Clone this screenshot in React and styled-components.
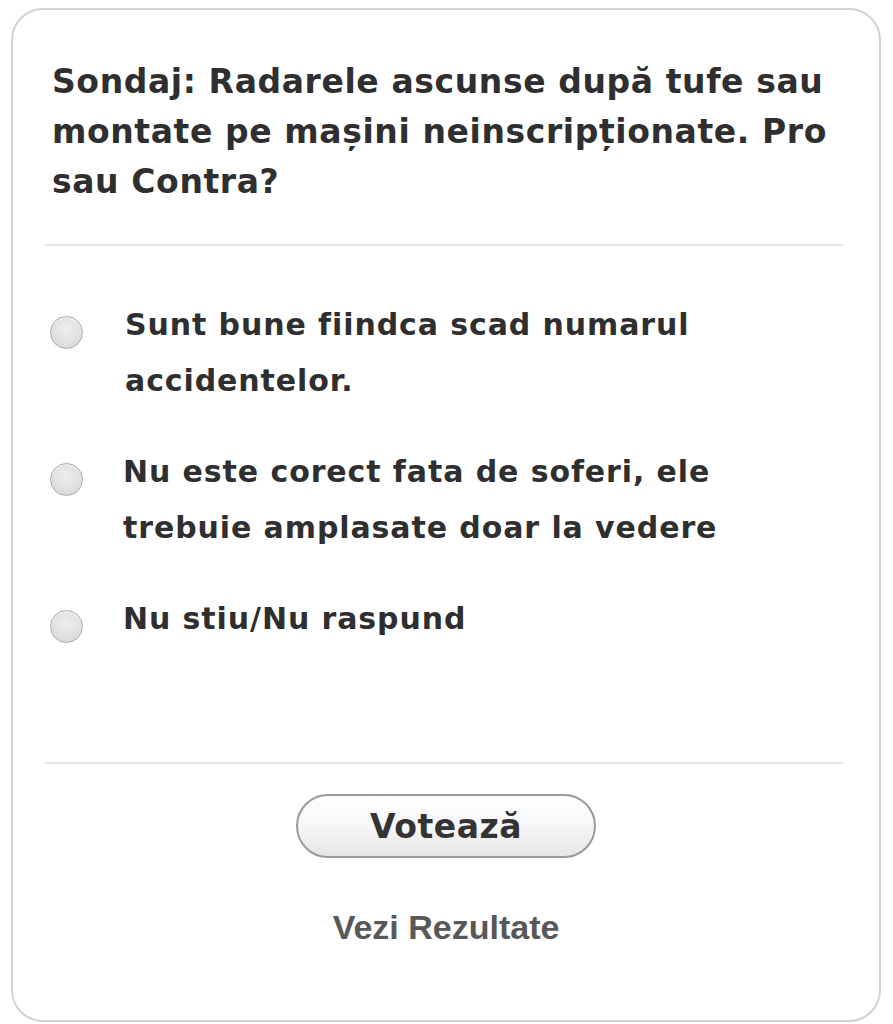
import styled, { createGlobalStyle } from 'styled-components'

const Global = createGlobalStyle`
  html, body {
    margin: 0;
    padding: 0;
    background: #ffffff;
  }
`

const Card = styled.div`
  box-sizing: border-box;
  width: 870px;
  height: 1014px;
  margin: 8px 0 0 11px;
  border: 2px solid #d2d2d2;
  border-radius: 32px;
  background: #fff;
  padding-top: 47px;
  font-family: "DejaVu Sans", Verdana, sans-serif;
  color: #2f2f2f;
`

const Title = styled.h2`
  margin: 0;
  padding: 0 24px 0 39px;
  font-size: 33px;
  line-height: 50px;
  letter-spacing: 0.6px;
  font-weight: bold;
`

const Divider = styled.hr`
  border: 0;
  height: 2px;
  background: #e4e4e4;
  margin: ${(p) => p.$top}px 36px 0 32px;
`

const Options = styled.div`
  display: flex;
  flex-direction: column;
  gap: 35px;
  margin-top: 51px;
  padding-left: 37px;
  height: 465px;
  box-sizing: border-box;
`

const Option = styled.label`
  display: flex;
  align-items: flex-start;
  gap: 40px;
  cursor: pointer;
`

const Radio = styled.span`
  flex: none;
  width: 31px;
  height: 31px;
  margin-top: 19px;
  border-radius: 50%;
  border: 1px solid #a8a8a8;
  background: radial-gradient(circle at 50% 40%, #eeeeee 0%, #dcdcdc 70%, #cfcfcf 100%);
  box-shadow: inset 0 1px 2px rgba(255, 255, 255, 0.8);
`

const OptionText = styled.span`
  font-size: 30px;
  line-height: 56px;
  letter-spacing: 0.9px;
  font-weight: bold;
  max-width: 660px;
  padding-left: ${(p) => p.$shift || 0}px;
`

const Footer = styled.div`
  display: flex;
  flex-direction: column;
  align-items: center;
  padding-top: 30px;
`

const VoteButton = styled.button`
  width: 300px;
  height: 64px;
  border: 2px solid #9a9a9a;
  border-radius: 32px;
  background: linear-gradient(#ffffff 0%, #f6f6f6 50%, #e6e6e6 100%);
  font-family: "DejaVu Sans", Verdana, sans-serif;
  font-size: 33px;
  letter-spacing: 0.5px;
  font-weight: bold;
  color: #333;
  cursor: pointer;
`

const ResultsLink = styled.a`
  margin-top: 50px;
  font-family: "Liberation Sans", Arial, sans-serif;
  font-size: 34px;
  font-weight: bold;
  color: #585858;
  text-decoration: none;
`

const options = [
  { text: 'Sunt bune fiindca scad numarul accidentelor.', shift: 2 },
  { text: 'Nu este corect fata de soferi, ele trebuie amplasate doar la vedere' },
  { text: 'Nu stiu/Nu raspund' },
]

export default function App() {
  return (
    <>
      <Global />
      <Card>
        <Title>
          Sondaj: Radarele ascunse după tufe sau montate pe mașini neinscripționate. Pro sau Contra?
        </Title>
        <Divider $top={37} />
        <Options>
          {options.map((o) => (
            <Option key={o.text}>
              <Radio />
              <OptionText $shift={o.shift}>{o.text}</OptionText>
            </Option>
          ))}
        </Options>
        <Divider $top={0} />
        <Footer>
          <VoteButton>Votează</VoteButton>
          <ResultsLink href="#">Vezi Rezultate</ResultsLink>
        </Footer>
      </Card>
    </>
  )
}
